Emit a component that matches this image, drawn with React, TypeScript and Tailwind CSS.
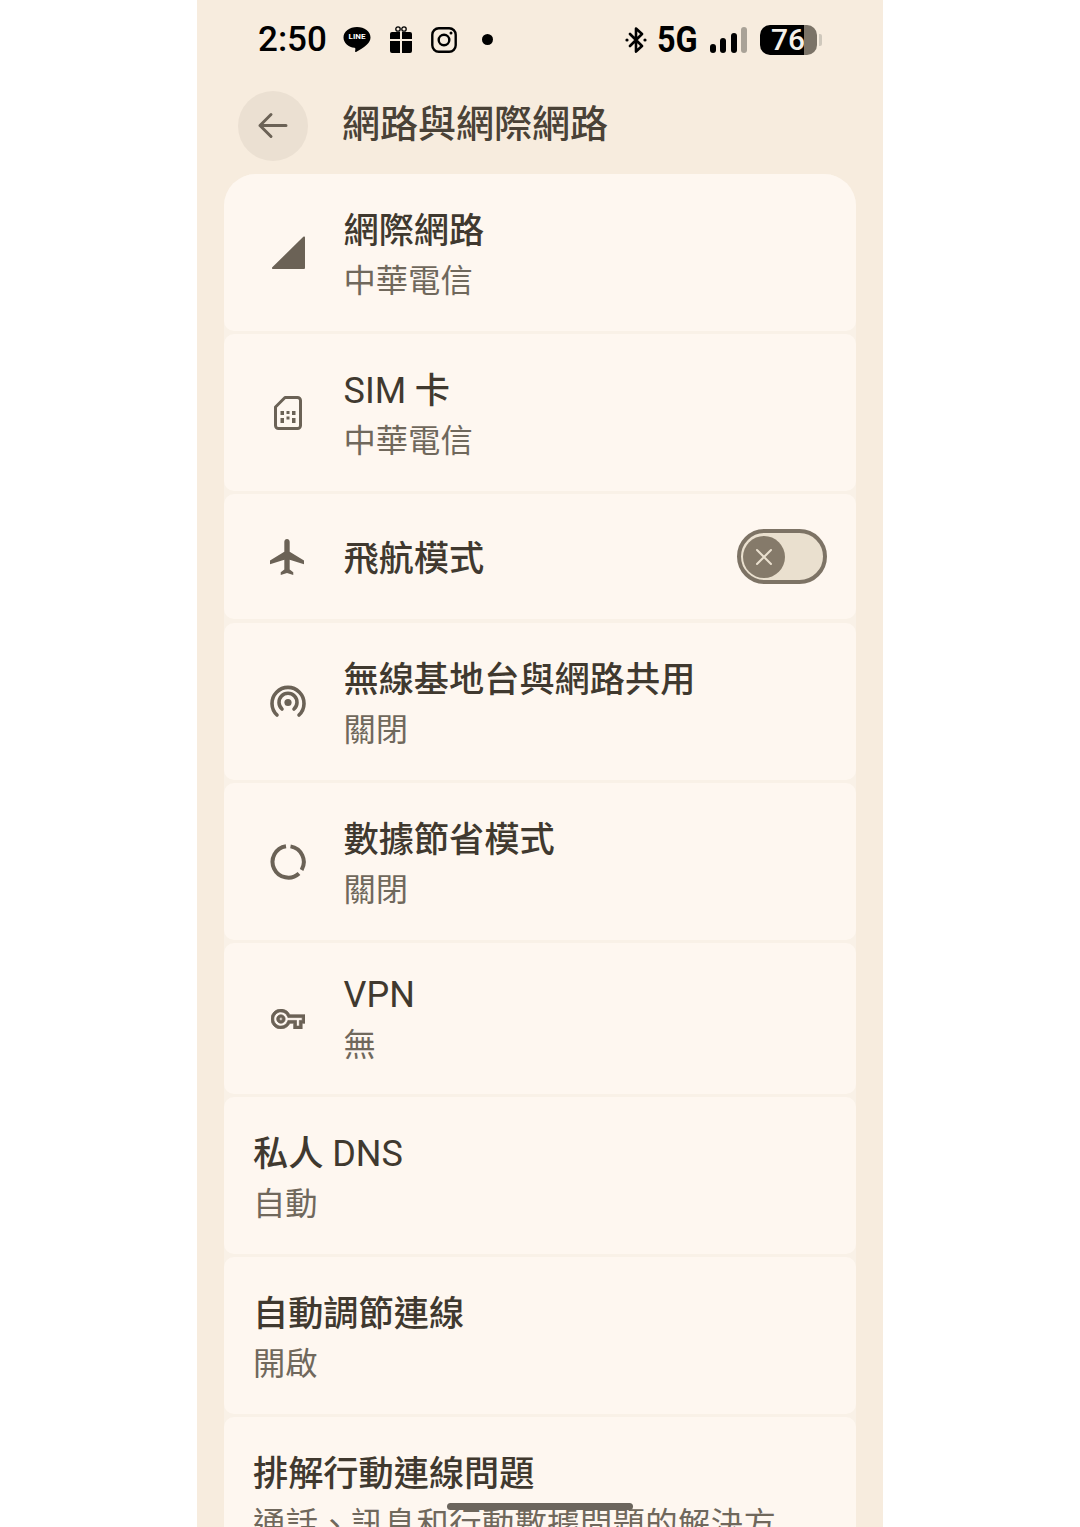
import React from "react";

const FONT = { fontFamily: '"Roboto", "Noto Sans CJK TC", sans-serif' };

function LineIcon() {
  return (
    <div className="relative w-[28px] h-[28px] flex items-start justify-center">
      <svg width="28" height="28" viewBox="0 0 28 28" className="absolute left-0 top-0">
        <path d="M14 1C6.500 1 .5 5.200.5 11.500c0 5.600 5 9.600 11 10.300.9.200 1 .8.8 2l-.2 1.200c-.1.8.5 1.300 1.400.8 3-1.600 8-4.600 10.500-7.300 2-1.900 3.500-4.200 3.500-7C27.500 5.200 21.500 1 14 1z" fill="#000" />
      </svg>
      <span className="relative text-white text-[8px] leading-[8px] font-bold mt-[7px]">LINE</span>
    </div>
  );
}

function GiftIcon() {
  return (
    <svg width="22" height="27" viewBox="0 0 22 27">
      <circle cx="8" cy="3" r="2.200" fill="none" stroke="#000" strokeWidth="1.300" />
      <circle cx="14" cy="3" r="2.200" fill="none" stroke="#000" strokeWidth="1.300" />
      <path d="M2 6h8v7H0V8a2 2 0 0 1 2-2zM12 6h8a2 2 0 0 1 2 2v5H12zM0 15h10v12H2a2 2 0 0 1-2-2zM12 15h10v10a2 2 0 0 1-2 2h-8z" fill="#000" />
    </svg>
  );
}

function InstaIcon() {
  return (
    <svg width="26" height="26" viewBox="0 0 26 26" fill="none" stroke="#000">
      <rect x="1.300" y="1.300" width="23.400" height="23.400" rx="6.500" strokeWidth="2.400" />
      <circle cx="13" cy="13" r="5.300" strokeWidth="2.400" />
      <circle cx="20" cy="6" r="1.500" fill="#000" stroke="none" />
    </svg>
  );
}

function BluetoothIcon() {
  return (
    <svg width="22" height="26" viewBox="0 0 22 26" fill="none" stroke="#000" strokeWidth="2.600" strokeLinejoin="round" strokeLinecap="round">
      <path d="M5 7l12 12-6 5.500V1.500L17 7 5 19" />
      <circle cx="2" cy="13" r="1.600" fill="#000" stroke="none" />
      <circle cx="20" cy="13" r="1.600" fill="#000" stroke="none" />
    </svg>
  );
}

function SignalBars() {
  return (
    <div className="flex items-end gap-[4.500px] h-[26px]">
      <div className="w-[6px] h-[9px] rounded-full bg-black" />
      <div className="w-[6px] h-[15px] rounded-full bg-black" />
      <div className="w-[6px] h-[20px] rounded-full bg-black" />
      <div className="w-[6px] h-[26px] rounded-full bg-[#a9a297]" />
    </div>
  );
}

function Battery() {
  return (
    <div className="flex items-center gap-[2px]">
      <div className="flex h-[30px] w-[57px]">
        <div className="w-[44px] h-[30px] rounded-l-[10px] bg-black flex items-center pl-[11px]">
          <span className="text-[#f4f0ea] text-[30px] leading-[30px] font-medium whitespace-nowrap">76</span>
        </div>
        <div className="w-[13px] h-[30px] rounded-r-[10px] bg-[#7b7367]" />
      </div>
      <div className="w-[3px] h-[12px] rounded-r-[2px] bg-[#cfc8bc]" />
    </div>
  );
}

function StatusBar() {
  return (
    <div className="h-[79px] pl-[61px] pr-[61px] flex items-center justify-between">
      <div className="flex items-center">
        <span className="text-[35px] leading-[40px] font-medium text-black w-[83px]">2:50</span>
        <div className="ml-[2px]"><LineIcon /></div>
        <div className="ml-[19px]"><GiftIcon /></div>
        <div className="ml-[19px]"><InstaIcon /></div>
        <div className="ml-[25px] w-[11px] h-[11px] rounded-full bg-black" />
      </div>
      <div className="flex items-center">
        <BluetoothIcon />
        <span className="ml-[10px] text-[36px] leading-[40px] font-bold text-black scale-x-[0.9] origin-left w-[43px]">5G</span>
        <div className="ml-[10px]"><SignalBars /></div>
        <div className="ml-[13px]"><Battery /></div>
      </div>
    </div>
  );
}

function Header() {
  return (
    <div className="h-[95px] pl-[41px] flex items-start pt-[12px]">
      <div className="w-[70px] h-[70px] rounded-full bg-[#ebe0d2] flex items-center justify-center">
        <svg width="32" height="32" viewBox="0 0 32 32" fill="none" stroke="#6b6256" strokeWidth="3" strokeLinecap="round" strokeLinejoin="round">
          <path d="M29 15.500H3M14 4.500 3 15.500l11 11" />
        </svg>
      </div>
      <h1 className="ml-[34px] text-[38px] leading-[66px] font-medium text-[#4a4237]">網路與網際網路</h1>
    </div>
  );
}

const IC = "#6b6256";

const icons = {
  signal: (
    <svg width="34" height="34" viewBox="0 0 34 34"><path d="M34 1.500V32a1 1 0 0 1-1 1H2a1 1 0 0 1-.7-1.700L32.300.8A1 1 0 0 1 34 1.500z" fill={IC} /></svg>
  ),
  sim: (
    <svg width="28" height="34" viewBox="0 0 28 34" fill="none">
      <path d="M11 1.500h12.500a3 3 0 0 1 3 3v25a3 3 0 0 1-3 3h-19a3 3 0 0 1-3-3V11z" stroke={IC} strokeWidth="3" strokeLinejoin="round" />
      <path d="M6.500 15h3.500v4H6.500zM6.500 22h3.500v5H6.500zM12.500 15H15.500v3h-3zM12.500 20.500H15.500v3h-3zM18 15h3.500v4H18zM18 22h3.500v5H18z" fill={IC} />
    </svg>
  ),
  plane: (
    <svg width="34" height="36" viewBox="2 2 19 20" className="-translate-x-[1px]"><path d="M21 16v-2l-8-5V3.500c0-.83-.67-1.500-1.500-1.500S10 2.670 10 3.500V9l-8 5v2l8-2.500V19l-2 1.500V22l3.500-1 3.500 1v-1.500L13 19v-5.500l8 2.500z" fill={IC} /></svg>
  ),
  hotspot: (
    <svg width="36" height="33" viewBox="0 0 36 33" fill="none" stroke={IC} strokeWidth="3.600" strokeLinecap="round">
      <path d="M7 30a16 16 0 1 1 22 0" />
      <path d="M12 24a9 9 0 1 1 12 0" />
      <circle cx="18" cy="17.500" r="3.600" fill={IC} stroke="none" />
    </svg>
  ),
  saver: (
    <svg width="36" height="36" viewBox="0 0 36 36" fill="none" stroke={IC} strokeWidth="4">
      <path d="M16 2.200A15.800 15.800 0 1 0 29 29.500" />
      <path d="M20.500 2.400A15.800 15.800 0 0 1 31.600 26" />
    </svg>
  ),
  key: (
    <svg width="34" height="20" viewBox="0 5 24 14"><path d="M22 19h-6v-4h-2.680c-1.140 2.420-3.600 4-6.320 4-3.860 0-7-3.140-7-7s3.140-7 7-7c2.720 0 5.170 1.580 6.320 4H24v6h-2v4zm-4-2h2v-4h2v-2H11.940l-.23-.67C11.010 8.340 9.110 7 7 7c-2.760 0-5 2.240-5 5s2.240 5 5 5c2.110 0 4.010-1.340 4.710-3.330l.23-.67H18v4zM7 15c-1.650 0-3-1.350-3-3s1.350-3 3-3 3 1.350 3 3-1.350 3-3 3zm0-4c-.55 0-1 .45-1 1s.45 1 1 1 1-.45 1-1-.45-1-1-1z" fill={IC} stroke={IC} strokeWidth="0.500" /></svg>
  ),
};

function Toggle() {
  return (
    <div className="mr-[29px] w-[90px] h-[55px] rounded-full border-[4px] border-[#7d7365] bg-[#eae0cf] flex items-center pl-[2px]">
      <div className="w-[42px] h-[42px] rounded-full bg-[#857a6a] flex items-center justify-center">
        <svg width="18" height="18" viewBox="0 0 18 18" stroke="#eae0cf" strokeWidth="2" strokeLinecap="round"><path d="M2 2l14 14M16 2 2 16" /></svg>
      </div>
    </div>
  );
}

type Row = {
  title: React.ReactNode;
  sub?: string;
  icon?: React.ReactNode;
  h: string;
  top?: string;
  toggle?: boolean;
  subClass?: string;
  textPt?: string;
  extra?: string;
};

const L = ({ children }: { children: string }) => <span className="font-normal text-[36px]">{children}</span>;

const rows: Row[] = [
  { title: "網際網路", sub: "中華電信", icon: icons.signal, h: "h-[157px]", top: "rounded-t-[32px]" },
  { title: <><L>SIM</L> 卡</>, sub: "中華電信", icon: icons.sim, h: "h-[157px]" },
  { title: "飛航模式", icon: icons.plane, h: "h-[125px]", toggle: true, textPt: "pt-[4px]", extra: "mb-[1px]" },
  { title: "無線基地台與網路共用", sub: "關閉", icon: icons.hotspot, h: "h-[157px]" },
  { title: "數據節省模式", sub: "關閉", icon: icons.saver, h: "h-[157px]" },
  { title: <L>VPN</L>, sub: "無", icon: icons.key, h: "h-[151px]", textPt: "pt-[2px]" },
  { title: <>私人 <L>DNS</L></>, sub: "自動", h: "h-[157px]" },
  { title: "自動調節連線", sub: "開啟", h: "h-[157px]" },
  { title: "排解行動連線問題", sub: "通話、訊息和行動數據問題的解決方", h: "h-[157px]", subClass: "tracking-[0.4px]" },
];

function Card({ r }: { r: Row }) {
  return (
    <div className={`${r.h} ${r.top ?? "rounded-t-[10px]"} ${r.extra ?? ""} rounded-b-[10px] bg-[#fef7f0] flex items-center shrink-0`}>
      {r.icon ? (
        <div className="w-[119.500px] pl-[28px] shrink-0 flex justify-center pr-[19.500px]">{r.icon}</div>
      ) : (
        <div className="w-[29px] shrink-0" />
      )}
      <div className={`flex-1 min-w-0 ${r.textPt ?? "pt-[6px]"}`}>
        <div className="text-[35.200px] leading-[50px] font-medium text-[#40392f] whitespace-nowrap">{r.title}</div>
        {r.sub && <div className={`text-[32.300px] leading-[50px] text-[#70685c] whitespace-nowrap ${r.subClass ?? ""}`}>{r.sub}</div>}
      </div>
      {r.toggle && <Toggle />}
    </div>
  );
}

export default function App() {
  return (
    <div className="w-[1080px] h-[1527px] bg-white flex justify-center overflow-hidden" style={FONT}>
      <div className="relative w-[686px] h-[1527px] bg-[#f7ecde] overflow-hidden">
        <StatusBar />
        <Header />
        <div className="mx-[27px] flex flex-col gap-[3px] bg-[#f9f1e7] rounded-t-[32px]">
          {rows.map((r, i) => (
            <Card key={i} r={r} />
          ))}
        </div>
        <div className="absolute left-[250px] top-[1503px] w-[186px] h-[7px] rounded-full bg-[#6b655d]" />
      </div>
    </div>
  );
}
